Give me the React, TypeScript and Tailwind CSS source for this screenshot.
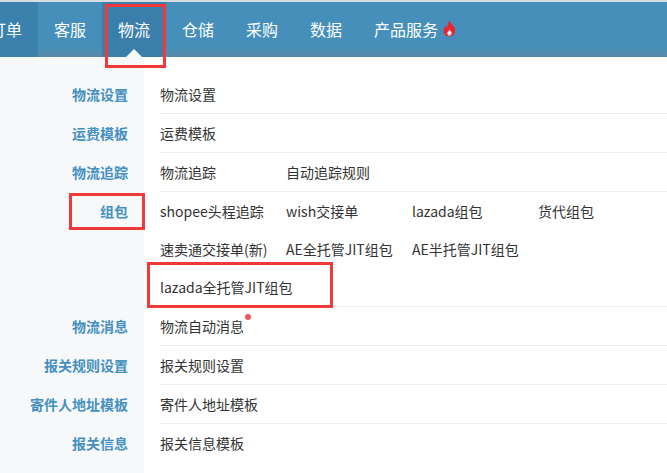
import React from 'react';

const TABS = ['订单', '客服', '物流', '仓储', '采购', '数据', '产品服务'];

type Section = { label: string; rows: string[][]; dot?: string };

const SECTIONS: Section[] = [
  { label: '物流设置', rows: [['物流设置']] },
  { label: '运费模板', rows: [['运费模板']] },
  { label: '物流追踪', rows: [['物流追踪', '自动追踪规则']] },
  {
    label: '组包',
    rows: [
      ['shopee头程追踪', 'wish交接单', 'lazada组包', '货代组包'],
      ['速卖通交接单(新)', 'AE全托管JIT组包', 'AE半托管JIT组包'],
      ['lazada全托管JIT组包'],
    ],
  },
  { label: '物流消息', rows: [['物流自动消息']], dot: '物流自动消息' },
  { label: '报关规则设置', rows: [['报关规则设置']] },
  { label: '寄件人地址模板', rows: [['寄件人地址模板']] },
  { label: '报关信息', rows: [['报关信息模板']] },
];

const Fire = () => (
  <svg width="15" height="17" viewBox="0 0 14 16" className="ml-1">
    <path
      d="M7 0.5C7.6 3 10.8 4.6 12 7.8C13.4 11.6 11 15.5 7 15.5C3 15.5 0.6 12.2 1.6 8.6C2.1 6.8 3.2 5.8 3.6 4.6C4.2 6 4.4 7 5.2 7.4C5 4.6 6 2.4 7 0.5Z"
      fill="#e8252f"
    />
    <path
      d="M7 8.6C7.5 10 9 10.8 9 12.5C9 13.8 8.1 14.5 7 14.5C5.9 14.5 5 13.8 5 12.6C5 11.5 5.8 10.9 6.1 10.2C6.4 10.7 6.6 11 7 11.2C6.8 10.3 6.8 9.4 7 8.6Z"
      fill="#ffffff"
    />
  </svg>
);

export default function App() {
  return (
    <div
      className="relative min-h-screen w-[667px] overflow-hidden bg-white text-[14px]"
      style={{ fontFamily: '"Noto Sans CJK SC", "Noto Sans", sans-serif' }}
    >
      <div className="h-[2px] bg-[#d8dde2]" />
      <nav className="flex h-[55px] bg-[linear-gradient(to_bottom,#458fba_0%,#458fba_82%,#5a8ba8_100%)] -ml-[26px]">
        {TABS.map((t, i) => (
          <div
            key={t}
            className={`relative flex h-full items-center px-4 pb-0.5 text-[16px] text-white ${
              i === 0 ? 'bg-[#3b81ad]' : i === 2 ? 'bg-[#3a7fab]' : ''
            }`}
          >
            {t}
            {i === 6 && <Fire />}
            {i === 2 && (
              <span className="absolute bottom-0 left-1/2 -ml-[8px] h-0 w-0 border-x-[8px] border-b-[8px] border-x-transparent border-b-[#f6f8fa]" />
            )}
          </div>
        ))}
      </nav>

      <div className="bg-[linear-gradient(to_right,#f6f8fa_144px,#ffffff_144px)] pt-[18px] pb-4">
        {SECTIONS.map((s, si) => (
          <div key={s.label} className="flex">
            <div className="flex h-[38px] w-[144px] shrink-0 items-center justify-end pr-4 font-bold text-[#4590c0]">
              {s.label}
            </div>
            <div
              className={`ml-4 flex-1 ${
                si === SECTIONS.length - 1 ? '' : 'border-b border-[#eeeeee]'
              }`}
            >
              {s.rows.map((r, ri) => (
                <div key={ri} className="flex h-[38px] items-center text-[#333333]">
                  {r.map((item) => (
                    <div key={item} className="w-[126px] shrink-0 whitespace-nowrap">
                      <span className="relative">
                        {item}
                        {s.dot === item && (
                          <span className="absolute -right-[7px] -top-[2px] h-[6px] w-[6px] rounded-full bg-[#f5545e]" />
                        )}
                      </span>
                    </div>
                  ))}
                </div>
              ))}
            </div>
          </div>
        ))}
      </div>

      {/* annotation boxes */}
      <div className="pointer-events-none absolute left-[105px] top-[4px] h-[64px] w-[61px] border-[3px] border-[#f03a3a]" />
      <div className="pointer-events-none absolute left-[69px] top-[193px] h-[37px] w-[76px] border-[3px] border-[#f03a3a]" />
      <div className="pointer-events-none absolute left-[147px] top-[262px] h-[46px] w-[186px] border-[3px] border-[#f03a3a]" />
    </div>
  );
}
